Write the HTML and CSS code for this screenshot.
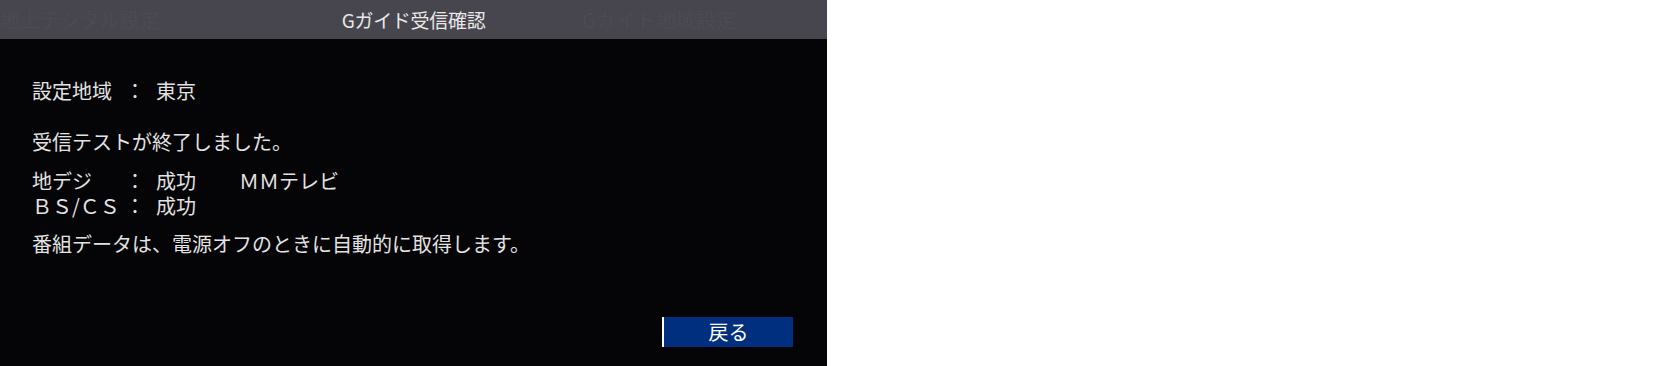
FILE: index.html
```html
<!DOCTYPE html>
<html lang="ja">
<head>
    <meta charset="UTF-8">
    <title>Gガイド受信確認</title>
    <link rel="stylesheet" href="styles.css">
</head>
<body>
    <div class="screen">
        <div class="head">
            <div class="ghost left">地上デジタル設定</div>
            <div class="title">Gガイド受信確認</div>
            <div class="ghost right">Gガイド地域設定</div>
        </div>
        <div class="content">
            <div class="row">
                <span class="label">設定地域</span><span class="colon">：</span><span class="value">東京</span>
            </div>
            <p class="msg">受信テストが終了しました。</p>
            <div class="result">
                <div class="row">
                    <span class="label">地デジ</span><span class="colon">：</span><span class="value">成功</span><span class="station">ＭＭテレビ</span>
                </div>
                <div class="row">
                    <span class="label">ＢＳ/ＣＳ</span><span class="colon">：</span><span class="value">成功</span>
                </div>
            </div>
            <p class="note">番組データは、電源オフのときに自動的に取得します。</p>
        </div>
        <div class="foot">
            <div class="btn">戻る</div>
        </div>
    </div>
</body>
</html>
```

FILE: styles.css
```css
*{padding: 0;margin: 0;}
body{background: #fff;font-family: "Noto Sans CJK JP", "Noto Sans", sans-serif;}
.screen{width: 827px;height: 366px;background: #050407;color: #e2e2e2;display: flex;flex-direction: column;}
.head{height: 39px;background: #47454d;display: grid;grid-template-columns: minmax(0,1fr) auto minmax(0,1fr);align-items: center;font-size: 20px;line-height: 39px;overflow: hidden;white-space: nowrap;}
.title{color: #e8e8e8;font-size: 19px;letter-spacing: -0.3px;}
.ghost{color: rgba(255,255,255,.04);overflow: hidden;}
.ghost.left{text-align: right;padding-right: 183px;}
.ghost.right{padding-left: 97px;}
.content{flex: 1;padding: 39px 0 0 32px;font-size: 20px;line-height: 25px;}
.row{display: flex;white-space: nowrap;}
.label{width: 93px;}
.colon{width: 20px;text-align: center;}
.value{margin-left: 11px;}
.station{margin-left: 43px;}
.msg{margin-top: 26px;}
.result{margin-top: 14px;}
.note{margin-top: 13px;}
.foot{display: flex;justify-content: flex-end;padding: 0 34px 19px 0;}
.btn{width: 129px;height: 30px;background: #002f80;border-left: 2px solid #fff;color: #fff;font-size: 20px;line-height: 30px;text-align: center;}
```
